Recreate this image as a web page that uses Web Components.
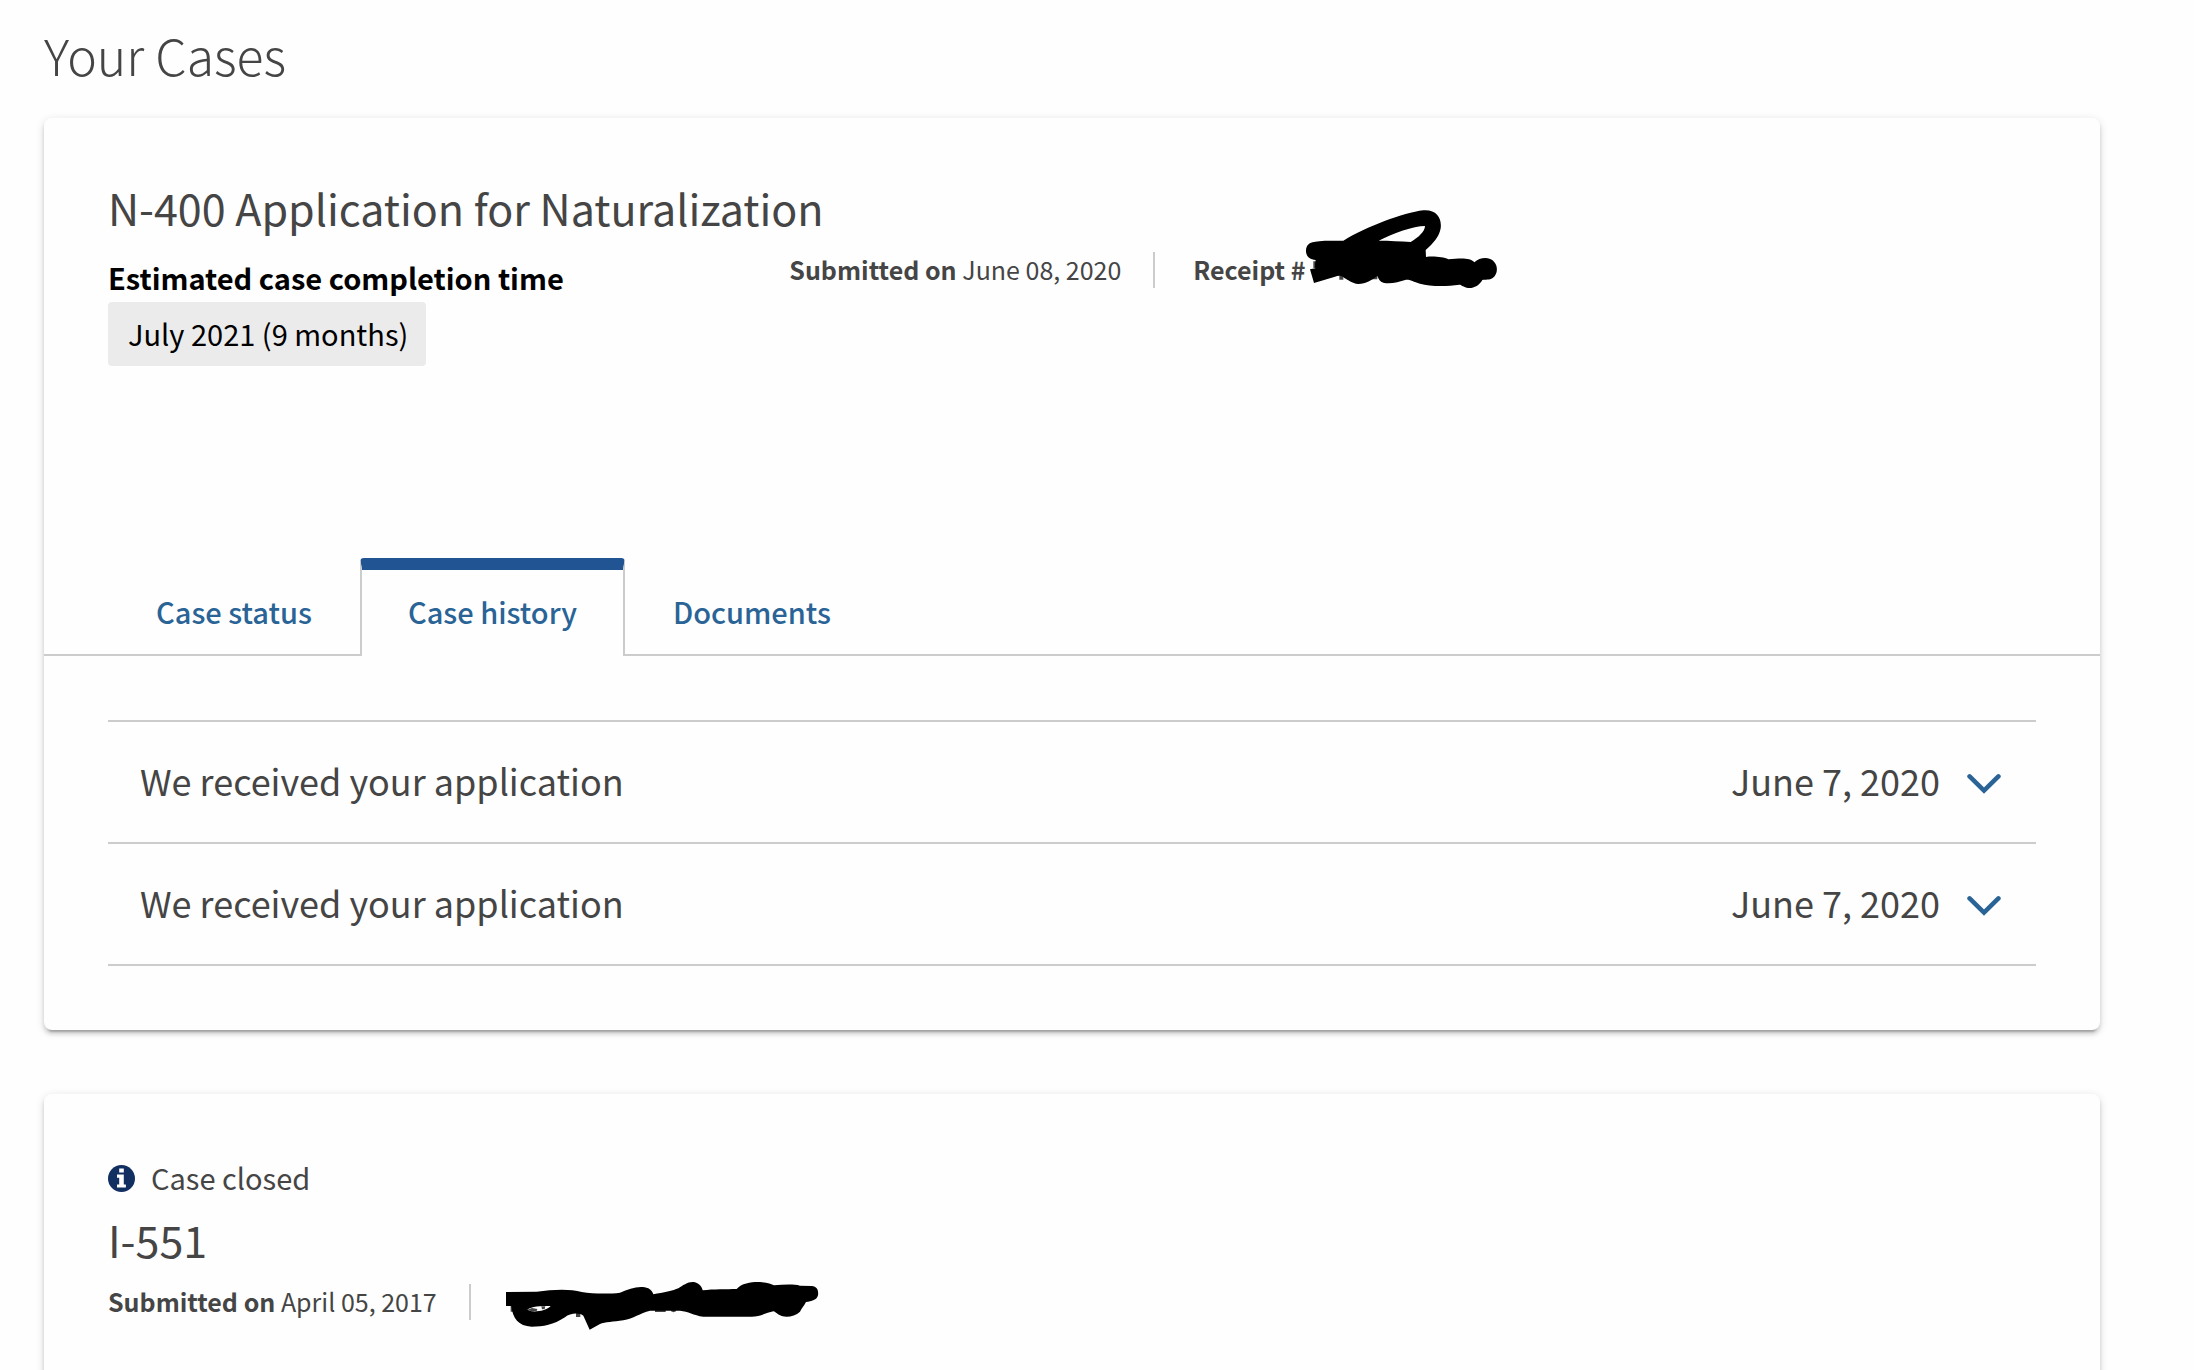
<!DOCTYPE html>
<html lang="en">
<head>
<meta charset="utf-8">
<meta name="viewport" content="width=device-width, initial-scale=1">
<title>Your Cases</title>
<style>
  :root {
    --ink: #454545;
    --link: #2a6496;
    --bar: #205493;
    --navy: #112f61;
    --line: #cccccc;
    --chip: #ebebeb;
    --surface: #fefefe;
  }
  body {
    margin: 0;
    background: var(--surface);
    color: var(--ink);
    font-family: "Noto Sans CJK SC", "Noto Sans", sans-serif;
    font-size: 29px;
  }
</style>
</head>
<body>
<case-list heading="Your Cases">
  <case-card heading="N-400 Application for Naturalization">
    <case-summary slot="summary">
      <completion-time label="Estimated case completion time">July 2021 (9 months)</completion-time>
      <case-meta slot="meta" submitted="June 08, 2020">
        <span slot="receipt">Receipt #</span>
        <ink-mark slot="receipt" kind="loop"></ink-mark>
      </case-meta>
    </case-summary>
    <case-tabs slot="tabs" items="Case status|Case history|Documents" selected="1">
      <history-item date="June 7, 2020">We received your application</history-item>
      <history-item date="June 7, 2020">We received your application</history-item>
    </case-tabs>
  </case-card>
  <case-card heading="I-551">
    <case-notice slot="notice">Case closed</case-notice>
    <case-meta slot="summary" submitted="April 05, 2017">
      <ink-mark slot="receipt" kind="line"></ink-mark>
    </case-meta>
  </case-card>
</case-list>

<script>
  const define = (name, render, after) => customElements.define(name, class extends HTMLElement {
    connectedCallback() {
      if (this.shadowRoot) return;
      const root = this.attachShadow({ mode: 'open' });
      root.innerHTML = render(this);
      if (after) after(root, this);
    }
  });

  define('case-list', el => `
    <style>
      :host { display: block; padding: 24px 94px 0 44px; }
      h1 { margin: 0 0 34px; font-size: 50px; line-height: 60px; font-weight: 200; }
      main { display: flex; flex-direction: column; gap: 64px; }
    </style>
    <h1>${el.getAttribute('heading')}</h1>
    <main><slot></slot></main>`);

  define('case-card', el => `
    <style>
      :host { display: block; }
      article {
        border-radius: 8px;
        background: var(--surface);
        box-shadow: 0 6px 2px -4px rgba(0,0,0,.2), 0 4px 4px 0 rgba(0,0,0,.14), 0 2px 10px 0 rgba(0,0,0,.12);
      }
      header { padding: 64px 64px 0; }
      h2 { margin: 0 0 20px; font-size: 43px; line-height: 50px; font-weight: 400; }
      footer { min-height: 64px; }
    </style>
    <article>
      <header>
        <slot name="notice"></slot>
        <h2>${el.getAttribute('heading')}</h2>
        <slot name="summary"></slot>
      </header>
      <slot name="tabs"></slot>
      <footer></footer>
    </article>`);

  define('case-summary', () => `
    <style>
      :host { display: grid; grid-template-columns: 1fr 2fr; column-gap: 58px; align-items: start; padding-bottom: 192px; }
    </style>
    <slot></slot>
    <slot name="meta"></slot>`);

  define('completion-time', el => `
    <style>
      :host { display: block; color: #000; }
      dl, dd { margin: 0; }
      dt { font-weight: 700; line-height: 50px; }
      dd { display: inline-block; padding: 0 18px 2px 20px; line-height: 62px; border-radius: 4px; background: var(--chip); vertical-align: top; }
    </style>
    <dl><dt>${el.getAttribute('label')}</dt><dd><slot></slot></dd></dl>`);

  define('case-meta', el => `
    <style>
      :host { display: flex; font-size: 25px; line-height: 34px; }
      .submitted { padding: 0 32px 2px 0; border-right: 2px solid var(--line); }
      .receipt { position: relative; display: flex; padding-left: 38px; font-weight: 700; }
    </style>
    <div class="submitted"><b>Submitted on</b> <time>${el.getAttribute('submitted')}</time></div>
    <div class="receipt"><slot name="receipt"></slot></div>`);

  const marks = {
    loop: `<svg width="220" height="100" viewBox="0 0 660 300" aria-hidden="true">
      <path fill="#454545" d="M70 184h12v20h-12zM148 226h12v13h-12zM246 226h16v12h-16z"/>
      <path fill-rule="evenodd" d="M72 126C85 121 130 122 160 122C230 80 340 38 400 31C440 28 456 55 452 85C448 110 430 130 407 150L408 171C430 168 460 171 475 178C510 175 540 172 553 187C570 170 600 170 612 185C626 200 622 225 608 234C598 241 585 238 577 240C568 258 545 268 530 263C518 260 514 254 508 254C470 260 420 260 390 251C370 245 360 238 348 239C325 246 300 254 280 248C270 245 266 238 262 228C245 240 228 252 205 252C185 250 175 240 163 234C155 225 145 226 135 230L72 249L60 208L76 205C74 198 76 186 77 180C55 178 47 165 48 150C49 135 60 127 72 126ZM266 122C310 100 370 78 405 78C405 95 385 112 362 126C330 124 300 122 266 122Z"/></svg>`,
    line: `<svg width="340" height="70" viewBox="0 0 1020 210" aria-hidden="true">
      <path fill="#454545" d="M62 106h10v19h-10zM258 126h13v15h-13zM495 118h32v8h-32zM543 118h15v6q-7 5-15 0z"/>
      <path fill-rule="evenodd" d="M48 66L140 65C190 58 240 56 275 66C310 72 360 72 390 68C420 55 450 45 475 55C485 60 488 68 490 73C520 68 550 62 565 55C580 45 598 32 615 37C630 42 636 52 638 61C670 57 710 58 740 57C755 38 790 35 810 36C830 37 845 42 852 46C880 44 910 42 930 47L965 48C982 49 986 62 984 76C981 90 965 94 948 96C942 108 935 115 930 125C915 140 890 143 875 138C862 134 858 126 850 124C830 128 810 140 785 140L640 140C610 136 595 124 570 122L480 122C450 130 430 145 400 151C370 156 345 156 330 162L299 179L280 137C270 128 240 128 225 142C190 165 160 170 125 170C85 168 68 145 64 108L48 108ZM112 119C125 109 150 108 182 108C172 120 145 126 125 124Z"/>
      <path fill="#454545" d="M112 119l14-5 16 3-2 6-15 1zM154 109l12 0-2 8-8 1z"/></svg>`
  };
  // Pen strokes drawn over the receipt number.
  define('ink-mark', el => `
    <style>
      :host { display: block; width: 0; height: 36px; }
      svg { position: absolute; }
      :host([kind="loop"]) svg { left: 135px; top: -52px; }
      :host([kind="line"]) svg { left: 19px; top: -14px; }
    </style>
    ${marks[el.getAttribute('kind')]}`);

  define('case-notice', () => `
    <style>
      :host { display: flex; align-items: center; gap: 16px; margin-bottom: 16px; line-height: 38px; }
      span { padding-bottom: 2px; }
      svg { flex: none; }
    </style>
    <svg width="27" height="27" viewBox="0 0 27 27" aria-hidden="true">
      <circle cx="13.5" cy="13.5" r="13.5" fill="var(--navy)"/>
      <path fill="#fff" d="M11.2 3.4h4.6v4h-4.6zM9 9.6h6.8v9.8h2.1v3.2H9v-3.2h2.2v-6.6H9z"/>
    </svg>
    <span><slot></slot></span>`);

  define('case-tabs', el => {
    const selected = Number(el.getAttribute('selected'));
    const tabs = el.getAttribute('items').split('|').map((label, i) =>
      `<button type="button" role="tab" id="tab${i}" aria-controls="panel" aria-selected="${i === selected}">${label}</button>`);
    return `
    <style>
      :host { display: block; }
      nav { display: flex; padding: 0 64px; border-bottom: 2px solid var(--line); }
      button {
        margin: 0; padding: 0 46px 2px; font: inherit; font-weight: 500; line-height: 82px; color: var(--link);
        background: none; border: 2px solid transparent; border-top-width: 12px; border-bottom: 0; cursor: pointer;
      }
      button[aria-selected="true"] {
        margin-bottom: -2px; padding-bottom: 4px; background: var(--surface);
        border-color: var(--bar) var(--line) transparent; border-radius: 4px 4px 0 0;
      }
      section { padding: 64px 64px 0; }
      .list { border-top: 2px solid var(--line); }
    </style>
    <nav role="tablist" aria-label="Case details">${tabs.join('')}</nav>
    <section id="panel" role="tabpanel" aria-labelledby="tab${selected}"><div class="list"><slot></slot></div></section>`;
  }, root => {
    const tabs = [...root.querySelectorAll('button')];
    tabs.forEach(tab => tab.addEventListener('click', () => {
      tabs.forEach(t => t.setAttribute('aria-selected', String(t === tab)));
      root.querySelector('section').setAttribute('aria-labelledby', tab.id);
    }));
  });

  define('history-item', el => `
    <style>
      :host { display: block; border-bottom: 2px solid var(--line); }
      button {
        display: flex; align-items: center; width: 100%; margin: 0; padding: 34px 35px 38px 32px;
        font: inherit; font-size: 36px; line-height: 48px; color: inherit; text-align: left;
        background: none; border: 0; cursor: pointer;
      }
      .label { flex: 1; }
      svg { margin-left: 27px; }
    </style>
    <button type="button" aria-expanded="false">
      <span class="label"><slot></slot></span>
      <time>${el.getAttribute('date')}</time>
      <svg width="34" height="30" viewBox="0 0 34 30" aria-hidden="true">
        <path d="M2.6 11.4L17 25.6L31.4 11.4" fill="none" stroke="var(--link)" stroke-width="4.6" stroke-linecap="round"/>
      </svg>
    </button>`);
</script>
</body>
</html>
